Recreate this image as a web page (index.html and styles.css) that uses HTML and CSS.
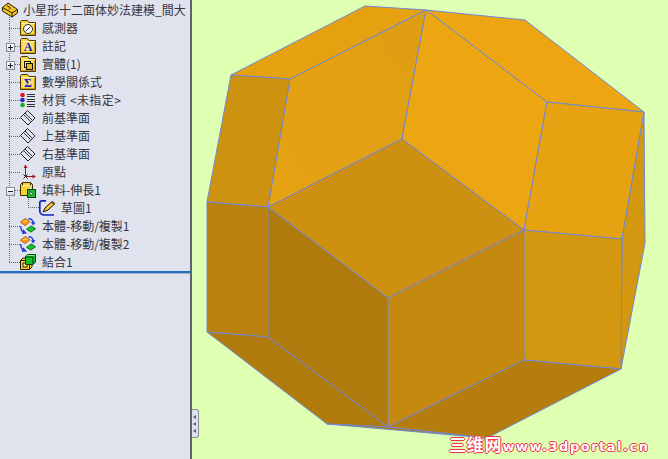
FILE: index.html
```html
<!DOCTYPE html>
<html lang="zh-Hant">
<head>
<meta charset="utf-8">
<title>小星形十二面体</title>
<link rel="stylesheet" href="styles.css">
</head>
<body>
<svg class="defs" width="0" height="0" aria-hidden="true">
  <symbol id="folder" viewBox="0 0 16 16">
    <path d="M.5 15.500V1.500L1.500 .5H7.500L9 2.500H15.500V15.500Z" fill="#fccf33" stroke="#4c3a00"/>
    <path d="M1.500 3.500H14.500" stroke="#fff6b8"/>
    <path d="M1.500 14.500H14.500V4.500" fill="none" stroke="#c99a10"/>
    <rect x="2.500" y="4.500" width="11" height="9" fill="#fde272"/>
  </symbol>
  <symbol id="plane" viewBox="0 0 16 16">
    <path d="M7.500 .5 15 8 8 15 .5 7.500Z" fill="none" stroke="#222"/>
    <path d="M3.500 4.500 10.500 11.500M5 3 12 10" fill="none" stroke="#333"/>
  </symbol>
  <symbol id="move" viewBox="0 0 17 17">
    <path d="M.5 4.500 5.500 .5 10.500 4 5.500 8Z" fill="#fb9a14" stroke="#b85a00"/>
    <path d="M3 4.500 5.500 3 8 4.200" fill="none" stroke="#ffe080"/>
    <path d="M7 12 12 8.500 16.500 11.500 11.500 15Z" fill="#10c828" stroke="#006a10"/>
    <path d="M9 .8C12 .8 14 2.500 14.200 6" fill="none" stroke="#1c3cd8" stroke-width="1.400"/>
    <path d="M11.500 4.500H16.500L14 8Z" fill="#1c3cd8"/>
    <path d="M.8 8.500C.8 12 2 14.500 4.500 15.500" fill="none" stroke="#1c3cd8" stroke-width="1.400"/>
    <path d="M3.500 12 7.500 16.500 2 17Z" fill="#1c3cd8"/>
  </symbol>
</svg>
<div class="app">
  <aside class="panel">
    <div class="tree">
      <div class="row root">
        <svg class="ico part" viewBox="0 0 16 15"><path d="M.5 5 6 .5 15.500 7V10.500L10 14.500 .5 8.500Z" fill="#f5c622" stroke="#241a00"/><path d="M.5 5 10 10.500 15.500 7M10 10.500V14.500M5 3 8.500 5.500 7 7" fill="none" stroke="#241a00"/></svg>
        <span class="label">小星形十二面体妙法建模_間大</span>
      </div>
      <div class="row"><span class="stub"></span><span class="ico"><svg viewBox="0 0 16 16"><use href="#folder"/><circle cx="8" cy="9" r="4.500" fill="#fff" stroke="#333"/><path d="M5.500 11.500 10.500 6.500" stroke="#333"/></svg></span><span class="label">感測器</span></div>
      <div class="row"><span class="stub"><span class="exp plus"></span></span><span class="ico"><svg viewBox="0 0 16 16"><use href="#folder"/></svg><b class="glyph">A</b></span><span class="label">註記</span></div>
      <div class="row"><span class="stub"><span class="exp plus"></span></span><span class="ico"><svg viewBox="0 0 16 16"><use href="#folder"/><rect x="4.500" y="5.500" width="6" height="6" fill="none" stroke="#111"/><rect x="6.500" y="7.500" width="6" height="6" fill="#e8b820" stroke="#111"/></svg></span><span class="label">實體(1)</span></div>
      <div class="row"><span class="stub"></span><span class="ico"><svg viewBox="0 0 16 16"><use href="#folder"/></svg><b class="glyph">Σ</b></span><span class="label">數學關係式</span></div>
      <div class="row"><span class="stub"></span><span class="ico"><svg viewBox="0 0 16 16"><circle cx="2.500" cy="3" r="2.300" fill="#e01818"/><circle cx="2.500" cy="8" r="2.300" fill="#2030d0"/><circle cx="2.500" cy="13" r="2.300" fill="#18b020"/><path d="M7 2.500H15M7 4.500H15M7 7.500H15M7 9.500H15M7 12.500H15M7 14.500H15" stroke="#333"/></svg></span><span class="label wide">材質 &lt;未指定&gt;</span></div>
      <div class="row"><span class="stub"></span><span class="ico"><svg viewBox="0 0 16 16"><use href="#plane"/></svg></span><span class="label">前基準面</span></div>
      <div class="row"><span class="stub"></span><span class="ico"><svg viewBox="0 0 16 16"><use href="#plane"/></svg></span><span class="label">上基準面</span></div>
      <div class="row"><span class="stub"></span><span class="ico"><svg viewBox="0 0 16 16"><use href="#plane"/></svg></span><span class="label">右基準面</span></div>
      <div class="row"><span class="stub"></span><span class="ico"><svg viewBox="0 0 16 16"><path d="M5.500 2V12.500H14" fill="none" stroke="#a01818"/><path d="M3.500 4 5.500 .5 7.500 4Z M12.500 10.500 16 12.500 12.500 14.500Z" fill="#a01818"/><path d="M3.500 10.500 7.500 14.500M7.500 10.500 3.500 14.500" stroke="#222"/></svg></span><span class="label">原點</span></div>
      <div class="row"><span class="stub"><span class="exp"></span></span><span class="ico"><svg viewBox="0 0 16 16"><path d="M.5 2.500 2.500 .5H10.500L12.500 2.500V13.500H.5Z" fill="#fccf33" stroke="#3a2c00"/><path d="M2.500 3.500H10.500V11" fill="none" stroke="#fff4a8"/><path d="M2.500 .5V3.500M10.500 .5V3.500" stroke="#3a2c00"/><rect x="7.500" y="7.500" width="8" height="8" fill="#18c030" stroke="#08401a"/><path d="M9.500 9 13.500 12 10.500 13.500Z" fill="#e8ffe8" stroke="#08401a" stroke-width=".7"/></svg></span><span class="label">填料-伸長1</span></div>
      <div class="row sub"><span class="substub"></span><span class="ico"><svg viewBox="0 0 16 16"><path d="M.8 11V2.500C.8 1.500 2 .8 3 .8H7M.8 11C.8 13.500 3 15 5 15H15" fill="none" stroke="#1420c0" stroke-width="1.700"/><path d="M4 12 6 8 13 1.500 16 3.500 9 10Z" fill="#fbc828" stroke="#111"/><path d="M13 1.500 16 3.500 15 5 12 3Z" fill="#a85030"/></svg></span><span class="label">草圖1</span></div>
      <div class="row"><span class="stub"></span><span class="ico"><svg viewBox="0 0 17 17"><use href="#move"/></svg></span><span class="label">本體-移動/複製1</span></div>
      <div class="row"><span class="stub"></span><span class="ico"><svg viewBox="0 0 17 17"><use href="#move"/></svg></span><span class="label">本體-移動/複製2</span></div>
      <div class="row"><span class="stub"></span><span class="ico"><svg viewBox="0 0 16 16"><path d="M.5 6.500 3 4H12V13L9.500 15.500H.5Z" fill="#fccf33" stroke="#2a2000"/><path d="M.5 6.500H9.500V15.500" fill="none" stroke="#2a2000"/><rect x="3" y="9" width="4" height="4" fill="#fff4b0" stroke="#2a2000"/><path d="M5.500 3 7.500 .5H15.500V8L13 10.500H5.500Z" fill="#12c030" stroke="#064016"/><path d="M5.500 3H13V10.500" fill="none" stroke="#064016"/><path d="M7 1.500H14.500" stroke="#80f090"/></svg></span><span class="label">結合1</span></div>
    </div>
    <div class="rollback"></div>
  </aside>
  <main class="view">
    <svg class="solid" viewBox="0 0 476 459" width="476" height="459" role="img" aria-label="小星形十二面体模型">
      <defs>
        <linearGradient id="big" x1="0" y1="1" x2="1" y2="0"><stop offset="0" stop-color="#e5a212"/><stop offset="1" stop-color="#df9e12"/></linearGradient>
      </defs>
      <g transform="translate(-192 0)" stroke="#7188d2" stroke-width="1" stroke-linejoin="round">
        <polygon points="231,75 365,6 426,10 290,79" fill="#e6a111"/>
        <polygon points="426,10 525,20 644,112 547,102" fill="#eda611"/>
        <polygon points="290,79 426,10 402,139 268,207" fill="url(#big)"/>
        <polygon points="426,10 547,102 524,230 402,139" fill="#eca612"/>
        <polygon points="547,102 644,112 622,239 524,230" fill="#e6a211"/>
        <polygon points="644,112 645,243 621,369 622,239" fill="#d3980f"/>
        <polygon points="231,75 290,79 268,207 207,202" fill="#cc9210"/>
        <polygon points="402,139 524,230 388,298 268,207" fill="#cd9010"/>
        <polygon points="207,202 268,207 268,337 207,332" fill="#ba820c"/>
        <polygon points="268,207 388,298 388,427 268,337" fill="#b07a0c"/>
        <polygon points="207,332 268,337 388,427 327,424" fill="#b07a0c"/>
        <polygon points="388,298 524,230 524,360 388,427" fill="#c4890e"/>
        <polygon points="524,230 622,239 621,369 524,360" fill="#d3980f"/>
        <polygon points="388,427 524,360 621,369 487,438" fill="#b57d0c"/>
        <polygon points="327,424 388,427 487,438" fill="#b07a0c"/>
      </g>
    </svg>
    <span class="grip"><i></i><i></i><i></i></span>
    <span class="mark"><span class="mark-cn">三维网</span>www.3dportal.cn</span>
  </main>
</div>
</body>
</html>
```

FILE: styles.css
```css
html, body {
  margin: 0;
  padding: 0;
  height: 100%;
  overflow: hidden;
}
.defs { display: block; height: 0; }
.app {
  display: flex;
  width: 668px;
  height: 459px;
  font-family: "Noto Sans CJK TC", "Liberation Sans", sans-serif;
  font-size: 12px;
  color: #35353f;
}
.panel {
  width: 190px;
  flex: none;
  box-sizing: content-box;
  background: #e0e3ee;
  border-right: 2px solid #62626e;
  display: flex;
  flex-direction: column;
}
.tree {
  position: relative;
  padding-top: 1px;
  height: 270px;
  box-sizing: border-box;
}
.tree::before {
  content: "";
  position: absolute;
  left: 9px;
  top: 17px;
  height: 245px;
  border-left: 1px dotted #666;
}
.row {
  display: flex;
  align-items: center;
  height: 18px;
  position: relative;
}
.root { padding-left: 2px; }
.root .label { margin-left: 5px; }
.part { width: 16px; height: 15px; }
.stub {
  position: relative;
  width: 11px;
  margin-left: 9px;
  flex: none;
  border-top: 1px dotted #666;
}
.substub {
  width: 11px;
  height: 9px;
  margin: 0 0 9px 28px;
  flex: none;
  border-left: 1px dotted #666;
  border-bottom: 1px dotted #666;
  box-sizing: border-box;
}
.exp {
  position: absolute;
  left: -3px;
  top: -4px;
  width: 7px;
  height: 7px;
  background: linear-gradient(#fff, #d8d8e0);
  border: 1px solid #8a8a94;
}
.exp::before {
  content: "";
  position: absolute;
  left: 1px;
  top: 3px;
  width: 5px;
  height: 1px;
  background: #222;
}
.plus::after {
  content: "";
  position: absolute;
  left: 3px;
  top: 1px;
  width: 1px;
  height: 5px;
  background: #222;
}
.ico {
  position: relative;
  display: block;
  flex: none;
  width: 16px;
  height: 16px;
}
.ico svg { display: block; width: 16px; height: 16px; overflow: visible; }
.glyph {
  position: absolute;
  left: 0;
  right: 0;
  top: 3px;
  text-align: center;
  font: bold 12px/13px "Liberation Serif", serif;
  color: #1420c8;
}
.label {
  margin-left: 6px;
  white-space: nowrap;
  line-height: 18px;
}
.wide { letter-spacing: .4px; }
.rollback {
  height: 2px;
  margin-top: 1px;
  background: #1c72c8;
  border-bottom: 1px solid #a8acc0;
}
.view {
  position: relative;
  flex: 1;
  background: #dfffb2;
  overflow: hidden;
}
.solid { display: block; }
.grip {
  position: absolute;
  left: -2px;
  top: 409px;
  width: 8px;
  height: 27px;
  background: #e0e3ee;
  border: 1px solid #8a8a98;
  border-left: 0;
  border-radius: 0 3px 3px 0;
  display: flex;
  flex-direction: column;
  align-items: center;
  justify-content: center;
  gap: 3px;
}
.grip i {
  display: block;
  width: 0;
  height: 0;
  border-style: solid;
  border-width: 2.500px 3px 2.500px 0;
  border-color: transparent #5656a0 transparent transparent;
}
.mark {
  position: absolute;
  left: 257px;
  top: 435px;
  font-family: "DejaVu Sans", sans-serif;
  font-weight: bold;
  font-size: 13px;
  line-height: 18px;
  letter-spacing: 1.500px;
  white-space: nowrap;
  color: #fff;
  text-shadow: 1px 0 #f03048, -1px 0 #f03048, 0 1px #f03048, 0 -1px #f03048;
}
.mark-cn {
  font-family: "Noto Sans CJK SC", sans-serif;
  font-size: 17px;
  letter-spacing: .8px;
}
```
